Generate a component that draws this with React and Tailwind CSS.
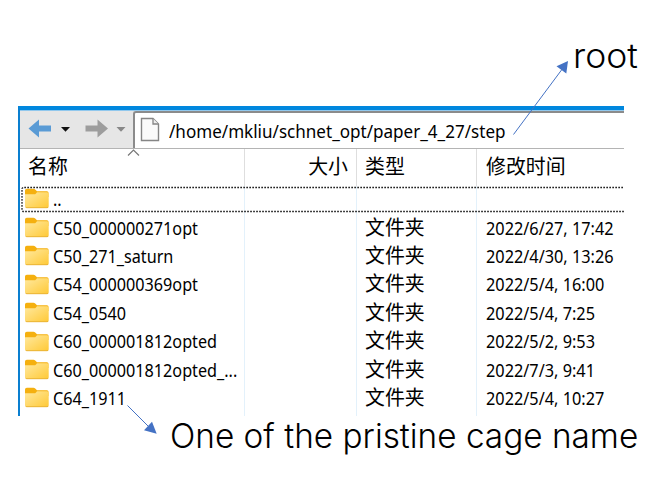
const files = [
  ["C50_000000271opt", "2022/6/27, 17:42"],
  ["C50_271_saturn", "2022/4/30, 13:26"],
  ["C54_000000369opt", "2022/5/4, 16:00"],
  ["C54_0540", "2022/5/4, 7:25"],
  ["C60_000001812opted", "2022/5/2, 9:53"],
  ["C60_000001812opted_...", "2022/7/3, 9:41"],
  ["C64_1911", "2022/5/4, 10:27"],
];

const latin =
  "inline-block origin-left whitespace-nowrap font-['Noto_Sans','Noto_Sans_CJK_SC',sans-serif] text-[18px]";
const cjk = "font-['Noto_Sans_CJK_SC',sans-serif] text-[19.9px] whitespace-nowrap";
const note = "inline-block origin-left whitespace-nowrap font-['Inter',sans-serif] font-light leading-[40px]";

function Folder() {
  return (
    <svg width="24" height="21" viewBox="0 0 24 21" className="shrink-0">
      <defs>
        <linearGradient id="folder" x1="0" y1="0" x2="1" y2="1">
          <stop offset="0" stopColor="#ffe9a0" />
          <stop offset="1" stopColor="#ffc936" />
        </linearGradient>
      </defs>
      <path d="M0 2.5Q0 .7 1.8.7H8.5Q9.5.7 10.2 1.5L12 3.2H22Q23.5 3.2 23.5 4.8V9H0Z" fill="#f5b00f" />
      <path d="M0 6.3H9.2Q10.2 6.3 11 5.4L12 4.2H22Q23.7 4.2 23.7 5.8V18Q23.7 19.8 22 19.8H1.8Q0 19.8 0 18Z" fill="url(#folder)" />
      <path d="M.3 18.8Q.8 19.7 1.8 19.7H22Q23.2 19.7 23.5 18.8" fill="none" stroke="#e9ae24" strokeWidth=".9" />
    </svg>
  );
}

function Toolbar() {
  return (
    <div className="flex h-[37px] bg-[#e6e6e6]">
      <svg width="113" height="37" viewBox="0 0 113 37" className="shrink-0">
        <path d="M8.5 17.5L19 8.5V14.5H31V20.5H19V26.5Z" fill="#5a9bd5" />
        <path d="M41 16H50L45.5 20.7Z" fill="#111" />
        <path d="M88 17.5L77.5 8.5V14.5H65.5V20.5H77.5V26.5Z" fill="#9d9d9d" />
        <path d="M96.5 16H105.5L101 20.7Z" fill="#888" />
      </svg>
      <div className="flex flex-1 items-center rounded-tl-[3px] border-t-2 border-l-2 border-[#8b8b8b] bg-white">
        <svg width="20" height="26" viewBox="0 0 20 26" className="mb-px ml-[5px] shrink-0">
          <path d="M1.5 1.5H13L18.5 7V23.5H1.5Z" fill="#fafafa" stroke="#858585" strokeWidth="1.4" />
          <path d="M13 1.5V7H18.5" fill="#eee" stroke="#858585" strokeWidth="1.3" />
        </svg>
        <span className={`${latin} ml-[9px] scale-x-[.948] pt-px`}>/home/mkliu/schnet_opt/paper_4_27/step</span>
      </div>
    </div>
  );
}

const grid = "grid grid-cols-[225px_112px_120px_1fr]";

export default function App() {
  return (
    <div className="relative h-[483px] w-[670px] overflow-hidden bg-white text-black">
      <div className="flex h-[106px] pt-[36px] pl-[573px]">
        <span className={`${note} scale-x-[1.06] text-[33.5px]`}>root</span>
      </div>

      <div className="flex h-[310px] ml-[18px] w-[606px] flex-col overflow-hidden border-t-4 border-l-2 border-t-[#0087de] border-l-[#0a7fd0]">
        <div className="h-px shrink-0 bg-[#91c8ed]" />
        <Toolbar />
        <div className="h-px shrink-0 bg-[#b4b4b4]" />
        <div className={`${grid} h-[37px] shrink-0`}>
          <div className="relative flex items-center border-r border-[#dedede] pb-1 pl-2">
            <span className={cjk}>名称</span>
            <svg width="13" height="7" viewBox="0 0 13 7" className="absolute top-0 left-[107px]">
              <path d="M1 6.5L6.5 1L12 6.5" fill="none" stroke="#777" strokeWidth="1.2" />
            </svg>
          </div>
          <div className="flex items-center justify-end border-r border-[#dedede] pr-2 pb-1">
            <span className={cjk}>大小</span>
          </div>
          <div className="flex items-center border-r border-[#dedede] pb-1 pl-2">
            <span className={cjk}>类型</span>
          </div>
          <div className="flex items-center pb-1 pl-[9px]">
            <span className={cjk}>修改时间</span>
          </div>
        </div>

        <div className={`${grid} relative h-[27.4px] shrink-0`}>
          <div className="flex border-r border-[#e3f1fb] pt-[2px] pl-[5px]">
            <Folder />
            <span className={`${latin} ml-1 scale-x-90 leading-[23px]`}>..</span>
          </div>
          <div className="border-r border-[#e3f1fb]" />
          <div className="border-r border-[#e3f1fb]" />
          <svg width="605" height="27" className="absolute top-0 left-px">
            <path d="M605 1.5H2L1 2.5V24.5L2 25.5H605" fill="none" stroke="#222" strokeWidth="1.3" strokeDasharray="1.7 1.3" />
          </svg>
        </div>
        {files.map(([name, date]) => (
          <div key={name} className={`${grid} h-[28.4px] shrink-0`}>
            <div className="flex items-center overflow-hidden border-r border-[#e3f1fb] pl-[5px]">
              <Folder />
              <span className={`${latin} ml-1 scale-x-90 pt-px`}>{name}</span>
            </div>
            <div className="border-r border-[#e3f1fb]" />
            <div className="flex items-center border-r border-[#e3f1fb] pb-0.5 pl-2">
              <span className={`${cjk} leading-6`}>文件夹</span>
            </div>
            <div className="flex items-center pl-[9px]">
              <span className={`${latin} scale-x-[.905] pt-px`}>{date}</span>
            </div>
          </div>
        ))}
        <div className={`${grid} flex-1`}>
          <div className="border-r border-[#e3f1fb]" />
          <div className="border-r border-[#e3f1fb]" />
          <div className="border-r border-[#e3f1fb]" />
        </div>
      </div>

      <div className="flex pl-[170px]">
        <span className={`${note} scale-x-[.995] text-[33.5px]`}>One of the pristine cage name</span>
      </div>

      <svg width="670" height="483" className="pointer-events-none absolute inset-0">
        <g stroke="#4472c4" fill="#4472c4">
          <path d="M513.5 134.5L563 68" strokeWidth="1" />
          <path d="M568 61L566.3 73.5L556.5 66.2Z" stroke="none" />
          <path d="M127.5 405.5L149 427" strokeWidth="1" />
          <path d="M156.7 433.7L144 430.2L152 421.8Z" stroke="none" />
        </g>
      </svg>
    </div>
  );
}
